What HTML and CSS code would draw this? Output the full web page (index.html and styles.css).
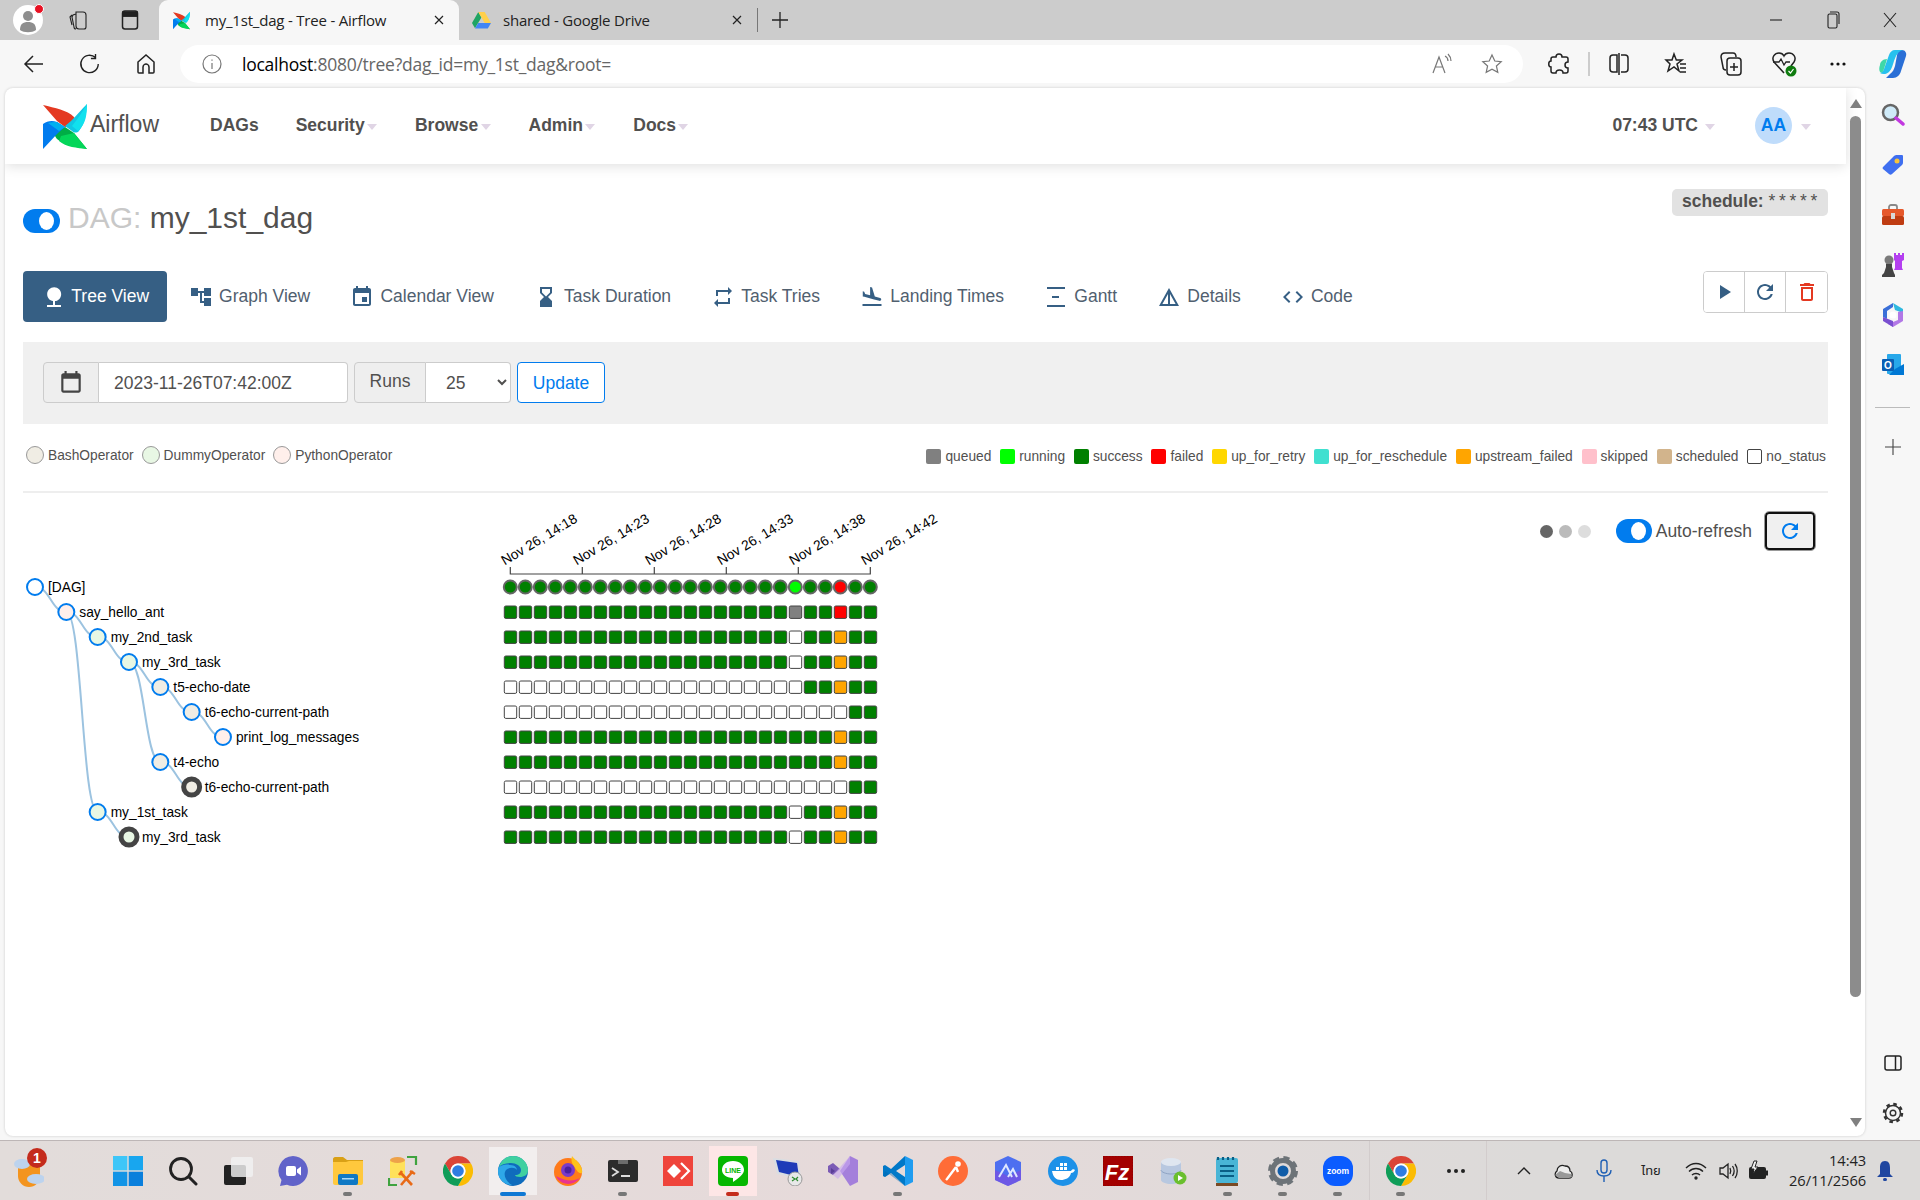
FILE: index.html
```html
<!DOCTYPE html>
<html lang="en">
<head>
<meta charset="utf-8">
<title>my_1st_dag - Tree - Airflow</title>
<link rel="stylesheet" href="styles.css">
</head>
<body>
<svg class="defs" aria-hidden="true">
  <symbol id="pin" viewBox="0 0 44 45">
    <path fill="#e43921" d="M0 1C12 4 24 6 31 13c2 3 1 7-2 9l-7 1L14 17z"/>
    <path fill="#11c7e3" d="M44 0c-1 12-2 19-8 27-2 2-5 2-7 0l-7-5 6-5C33 12 39 5 44 0z"/>
    <path fill="#11e1ee" d="M44 0c0 10-1 20-9 27l-6-5c5-6 11-15 15-22z"/>
    <path fill="#00ad46" d="M44 45c-12-2-23-4-30-10-3-3-3-7 0-9l8-3 9 6z"/>
    <path fill="#04d659" d="M44 45c-10-1-21-2-28-8l2-5 13-3z"/>
    <path fill="#017cee" d="M0 45V20c4-3 9-4 14-2l8 5-7 6C10 34 5 40 0 45z"/>
    <path fill="#00b0f0" d="M5 19c3-1 6-1 9-1l8 5-6 4c-4-3-8-6-11-8z"/>
  </symbol>
  <symbol id="chrome" viewBox="0 0 30 30">
    <path fill="#db4437" d="M2 7.5A15 15 0 0 1 28 7.5H15a7.5 7.5 0 0 0-6.5 11.25z"/>
    <path fill="#fbbc04" d="M28 7.5A15 15 0 0 1 15 30l6.5-11.25A7.5 7.5 0 0 0 15 7.5z"/>
    <path fill="#0f9d58" d="M15 30A15 15 0 0 1 2 7.5l6.5 11.25a7.5 7.5 0 0 0 13 0z"/>
    <circle cx="15" cy="15" r="7.5" fill="#fff"/><circle cx="15" cy="15" r="5.8" fill="#2f7de1"/>
  </symbol>
  <symbol id="refresh" viewBox="0 0 24 24"><path d="M17.65 6.35C16.2 4.9 14.21 4 12 4c-4.42 0-7.99 3.58-7.99 8s3.57 8 7.99 8c3.73 0 6.84-2.55 7.73-6h-2.08c-.82 2.33-3.04 4-5.65 4-3.31 0-6-2.69-6-6s2.69-6 6-6c1.66 0 3.14.69 4.22 1.78L13 11h7V4l-2.35 2.35z"/></symbol>
</svg>

<div class="tabstrip">
  <div class="cell profile-cell">
    <span class="profile">
      <svg width="30" height="30" viewBox="0 0 30 30"><circle cx="15" cy="15" r="15" fill="#fff"/><circle cx="15" cy="11" r="5" fill="#8e8e8e"/><path fill="#8e8e8e" d="M7 25c0-6 3-8 8-8s8 2 8 8c-4 3-12 3-16 0z"/></svg>
      <i class="profile-dot"></i>
    </span>
  </div>
  <div class="cell coll-cell"><svg width="22" height="22" viewBox="0 0 22 22" class="ln"><path d="M9 3l7 0c2 0 3 1 3 3v12c0 1-1 2-2 2h-5c-2 0-3-1-3-3V5c0-1 0-2 0-2zM9 5L6 6 5 8l2 10c0 1 1 2 2 2M5 6L3 8l2 8"/></svg></div>
  <div class="cell act-cell"><svg width="20" height="22" viewBox="0 0 20 22" class="ln thick"><rect x="2.5" y="2" width="15" height="18" rx="2.5"/><path d="M2.5 7h15"/><path d="M3 3h14v4H3z" fill="#222"/></svg></div>
  <div class="tab tab-active">
    <svg width="17" height="19"><use href="#pin"/></svg>
    <span class="tab-title">my_1st_dag - Tree - Airflow</span>
    <svg class="tab-x" width="12" height="12" viewBox="0 0 12 12"><path d="M2 2l8 8M10 2l-8 8" stroke="#222" stroke-width="1.2"/></svg>
  </div>
  <div class="tab tab-second">
    <svg width="19" height="17" viewBox="0 0 19 17"><path fill="#1fa463" d="M6.3 0L0 11l3 5.3L9.4 5.5z"/><path fill="#ffd04b" d="M12.7 0H6.3l6.4 11H19z"/><path fill="#4285f4" d="M3 16.5h12.8L19 11H6.2z"/></svg>
    <span class="tab-title">shared - Google Drive</span>
    <svg class="tab-x" width="12" height="12" viewBox="0 0 12 12"><path d="M2 2l8 8M10 2l-8 8" stroke="#222" stroke-width="1.2"/></svg>
  </div>
  <i class="tab-sep"></i>
  <div class="cell plus-cell"><svg width="18" height="18" viewBox="0 0 18 18"><path d="M9 1v16M1 9h16" stroke="#222" stroke-width="1.3"/></svg></div>
  <div class="win-controls">
    <div class="cell win"><svg width="14" height="14" viewBox="0 0 14 14"><path d="M1 7h12" stroke="#222" stroke-width="1.1"/></svg></div>
    <div class="cell win"><svg width="14" height="20" viewBox="0 0 14 20" class="ln"><rect x="2" y="4" width="9" height="14" rx="1.5"/><path d="M4 2h7c1 0 2 1 2 2v10"/></svg></div>
    <div class="cell win"><svg width="16" height="18" viewBox="0 0 16 18"><path d="M2 2l12 14M14 2L2 16" stroke="#222" stroke-width="1.1"/></svg></div>
  </div>
</div>

<div class="toolbar">
  <div class="cell tb"><svg width="22" height="22" viewBox="0 0 22 22" class="ln thick"><path d="M20 11H3M10 3l-8 8 8 8"/></svg></div>
  <div class="cell tb"><svg width="22" height="22" viewBox="0 0 24 24" class="ln thick"><path d="M18 5a9.5 9.5 0 1 0 3 7M18 1v5h-5"/></svg></div>
  <div class="cell tb"><svg width="22" height="22" viewBox="0 0 22 22" class="ln thick"><path d="M3 9l8-7 8 7v10c0 1-1 1-1 1h-4v-6c0-2-2-3-3-3s-3 1-3 3v6H4s-1 0-1-1z"/></svg></div>
  <div class="omnibox">
    <div class="cell info"><svg width="20" height="20" viewBox="0 0 20 20" class="ln grey"><circle cx="10" cy="10" r="9"/><path d="M10 9v6M10 5.5v1.2"/></svg></div>
    <span class="url"><span class="url-host">localhost</span>:8080/tree?dag_id=my_1st_dag&amp;root=</span>
    <div class="omni-right">
      <div class="cell om"><svg width="22" height="22" viewBox="0 0 22 22" class="ln grey"><path d="M2 20L8 4l6 16M4 14h8M14 3c2 1 3 3 3 5M17 1c2 2 3 4 3 7"/></svg></div>
      <div class="cell om"><svg width="22" height="22" viewBox="0 0 22 22" class="ln grey"><path d="M11 2l2.8 6 6.4.7-4.8 4.3 1.4 6.4L11 16.2l-5.8 3.2 1.4-6.4L1.8 8.7 8.200 8z"/></svg></div>
    </div>
  </div>
  <div class="cell ext"><svg width="22" height="24" viewBox="0 0 22 24" class="ln thick"><path d="M8 5c0-4 6-4 6 0h4c1 0 2 1 2 2v3c-4 0-4 6 0 6v3c0 1-1 2-2 2h-3c0-4-7-4-7 0H5c-1 0-2-1-2-2v-4c-3 0-3-6 0-6V7c0-1 1-2 2-2z"/></svg></div>
  <i class="tb-sep"></i>
  <div class="cell tr tr-split"><svg width="22" height="24" viewBox="0 0 22 24" class="ln thick"><path d="M9 3H5C3 3 2 4 2 6v11c0 2 1 3 3 3h4zM11 1v22M13 3h4c2 0 3 1 3 3v11c0 2-1 3-3 3h-4"/></svg></div>
  <div class="cell tr"><svg width="24" height="24" viewBox="0 0 24 24" class="ln thick"><path d="M10 2l2.300 6H18l-5 4 2 7-5-4-6 4 2-7-4-4h6zM16 12h6M16 16h6M16 20h6"/></svg></div>
  <div class="cell tr"><svg width="24" height="26" viewBox="0 0 24 26" class="ln thick"><rect x="8" y="7" width="14" height="17" rx="3"/><path d="M15 12v8M11 16h8M17 6c0-2-1-4-3-4H6C3 2 2 4 2 6l2 10c0 2 1 3 3 3"/></svg></div>
  <div class="cell tr tr-n"><svg width="26" height="26" viewBox="0 0 26 26"><path d="M13 22L3 11C0 6 4 2 8 2c2 0 4 1 5 3 1-2 3-3 5-3 4 0 8 4 5 9l-3 4" fill="none" stroke="#222" stroke-width="1.5"/><path d="M2 11h6l2-3 3 6 2-3h4" fill="none" stroke="#222" stroke-width="1.3"/><circle cx="20" cy="20" r="5.500" fill="#107c10"/><path d="M17.500 20l2 2 3-4" stroke="#fff" stroke-width="1.200" fill="none"/></svg></div>
  <div class="cell tr"><svg width="18" height="6" viewBox="0 0 18 6"><circle cx="3" cy="3" r="1.600" fill="#111"/><circle cx="9" cy="3" r="1.600" fill="#111"/><circle cx="15" cy="3" r="1.600" fill="#111"/></svg></div>
  <div class="cell tr"><svg width="30" height="30" viewBox="0 0 30 30"><path fill="#2a6fd6" d="M20 1h4c3 0 5 3 4 6l-5 15c-1 4-4 7-8 7H8l4-4c3-2 4-5 5-8z"/><path fill="#27c0ee" d="M17 1c-3 0-5 2-6 5L6 20c-1 3-4 4-4 4 3 2 7 1 9-1 3-3 4-8 5-11 2-5 3-9 9-11z" /><path fill="#3fd8a8" d="M2 16c0-3 3-6 7-6l-3 10c-1 3-2 4-4 3-1-2-1-4 0-7z"/></svg></div>
</div>

<div class="middle">
  <div class="card">
    <div class="page">
      <nav class="nav">
        <a class="brand">
          <svg class="brand-pin" width="44" height="45"><use href="#pin"/></svg>
          <span class="brand-name">Airflow</span>
        </a>
        <a class="nav-item nav-dags">DAGs</a>
        <a class="nav-item">Security<i class="caret"></i></a>
        <a class="nav-item">Browse<i class="caret"></i></a>
        <a class="nav-item">Admin<i class="caret"></i></a>
        <a class="nav-item">Docs<i class="caret"></i></a>
        <div class="nav-right">
          <span class="nav-time">07:43 UTC<i class="caret caret-time"></i></span>
          <span class="avatar">AA</span><i class="caret caret-avatar"></i>
        </div>
      </nav>

      <main class="content">
        <div class="head-row">
          <h1 class="dag-title"><span class="switch"><i class="knob"></i></span><span class="dag-label">DAG:</span> my_1st_dag</h1>
          <span class="schedule"><b>schedule:</b> <span class="cron">* * * * *</span></span>
        </div>

        <div class="tabs-row">
          <ul class="pills">
            <li class="pill pill-on"><svg class="mi" viewBox="0 0 24 24"><path d="M13 16.120c3.470-.41 6.170-3.360 6.170-6.950 0-3.870-3.130-7-7-7s-7 3.130-7 7c0 3.470 2.520 6.340 5.830 6.890V20H5v2h14v-2h-6v-3.880z"/></svg>Tree View</li>
            <li class="pill"><svg class="mi" viewBox="0 0 24 24"><path d="M22 11V3h-7v3H9V3H2v8h7V8h2v10h4v3h7v-8h-7v3h-2V8h2v3z"/></svg>Graph View</li>
            <li class="pill"><svg class="mi" viewBox="0 0 24 24"><path d="M17 12h-5v5h5v-5zM16 1v2H8V1H6v2H5c-1.110 0-1.990.9-1.990 2L3 19c0 1.100.89 2 2 2h14c1.100 0 2-.9 2-2V5c0-1.100-.9-2-2-2h-1V1h-2zm3 18H5V8h14v11z"/></svg>Calendar View</li>
            <li class="pill"><svg class="mi" viewBox="0 0 24 24"><path d="M18 22l-.01-6L14 12l3.990-4.010L18 2H6v6l4 4-4 3.990V22h12zM8 7.500V4h8v3.500l-4 4-4-4z"/></svg>Task Duration</li>
            <li class="pill"><svg class="mi" viewBox="0 0 24 24"><path d="M7 7h10v3l4-4-4-4v3H5v6h2V7zm10 10H7v-3l-4 4 4 4v-3h12v-6h-2v4z"/></svg>Task Tries</li>
            <li class="pill"><svg class="mi" viewBox="0 0 24 24"><path d="M2.500 19h19v2h-19zm7.180-5.730l4.350 1.160 5.310 1.420c.8.210 1.620-.26 1.840-1.060.21-.8-.26-1.620-1.060-1.840l-5.310-1.420-2.760-9.020L10.120 2v8.280L5.150 8.950l-.93-2.320-1.450-.39v5.170l1.600.43 5.310 1.430z"/></svg>Landing Times</li>
            <li class="pill"><svg class="mi" viewBox="0 0 24 24"><path d="M3 2h18v2H3zM3 20h18v2H3zM8 11h7v2H8z"/></svg>Gantt</li>
            <li class="pill"><svg class="mi" viewBox="0 0 24 24"><path d="M12 3L2 21h20L12 3zm1 5.920L18.600 19H13V8.920zm-2 0V19H5.400L11 8.920z"/></svg>Details</li>
            <li class="pill"><svg class="mi" viewBox="0 0 24 24"><path d="M9.400 16.600L4.800 12l4.600-4.600L8 6l-6 6 6 6 1.400-1.400zm5.200 0l4.600-4.600-4.600-4.600L16 6l6 6-6 6-1.400-1.400z"/></svg>Code</li>
          </ul>
          <div class="actions">
            <button class="act"><svg class="mi act-blue" viewBox="0 0 24 24"><path d="M8 5v14l11-7z"/></svg></button>
            <button class="act"><svg class="mi act-blue"><use href="#refresh"/></svg></button>
            <button class="act"><svg class="mi act-red" viewBox="0 0 24 24"><path d="M6 19c0 1.100.9 2 2 2h8c1.100 0 2-.9 2-2V7H6v12zM8 9h8v10H8V9zm7.500-5l-1-1h-5l-1 1H5v2h14V4z"/></svg></button>
          </div>
        </div>

        <form class="filter">
          <div class="group">
            <span class="addon addon-cal"><svg class="cal" viewBox="0 0 24 24"><path d="M19 3h-1V1h-2v2H8V1H6v2H5c-1.100 0-2 .9-2 2v14c0 1.100.9 2 2 2h14c1.100 0 2-.9 2-2V5c0-1.100-.9-2-2-2zm0 16H5V8h14v11z"/></svg></span>
            <input class="date" type="text" value="2023-11-26T07:42:00Z">
          </div>
          <div class="group">
            <span class="addon addon-runs">Runs</span>
            <select class="runs"><option>25</option></select>
          </div>
          <button type="button" class="update">Update</button>
        </form>

        <div class="legends">
          <div class="legend-ops">
            <span class="op"><i class="op-dot bash"></i>BashOperator</span>
            <span class="op"><i class="op-dot dummy"></i>DummyOperator</span>
            <span class="op"><i class="op-dot python"></i>PythonOperator</span>
          </div>
          <div class="legend-states">
            <span class="st"><i class="st-box queued"></i>queued</span>
            <span class="st"><i class="st-box running"></i>running</span>
            <span class="st"><i class="st-box success"></i>success</span>
            <span class="st"><i class="st-box failed"></i>failed</span>
            <span class="st"><i class="st-box retry"></i>up_for_retry</span>
            <span class="st"><i class="st-box resched"></i>up_for_reschedule</span>
            <span class="st"><i class="st-box upstream"></i>upstream_failed</span>
            <span class="st"><i class="st-box skipped"></i>skipped</span>
            <span class="st"><i class="st-box scheduled"></i>scheduled</span>
            <span class="st"><i class="st-box nostatus"></i>no_status</span>
          </div>
        </div>
        <hr class="rule">

        <section class="tree-area">
          <svg id="tree" class="tree-svg" width="1000" height="400" viewBox="23 493 1000 400"></svg>
          <div class="refresh-bar">
            <span class="dots"><i class="dot d1"></i><i class="dot d2"></i><i class="dot d3"></i></span>
            <span class="switch switch-auto"><i class="knob"></i></span>
            <span class="auto-label">Auto-refresh</span>
            <button class="refresh-btn"><svg class="mi rb-icon"><use href="#refresh"/></svg></button>
          </div>
        </section>
      </main>
    </div>
    <div class="scrollbar">
      <i class="sb-up"></i>
      <i class="sb-thumb"></i>
      <i class="sb-down"></i>
    </div>
  </div>

  <aside class="sidebar">
    <div class="cell side"><svg width="24" height="24" viewBox="0 0 24 24"><circle cx="9.500" cy="9.500" r="7.500" fill="#cfeaf8" stroke="#666" stroke-width="2.500"/><path d="M15 15l7 6" stroke="#c238e0" stroke-width="3.500" stroke-linecap="round"/></svg></div>
    <div class="cell side"><svg width="24" height="24" viewBox="0 0 24 24"><path fill="#3f6ff0" d="M2 14L13 3c1-1 2-1 3-1h5c1 0 1 1 1 1v6c0 1 0 2-1 3L11 21c-1 1-2 1-3 0l-6-5c-1-1 0-2 0-2z"/><circle cx="16" cy="8" r="2.500" fill="#f6c33b"/></svg></div>
    <div class="cell side"><svg width="24" height="22" viewBox="0 0 24 22"><path d="M8 5V3c0-1 1-2 2-2h4c1 0 2 1 2 2v2" fill="none" stroke="#888" stroke-width="1.800"/><rect x="1" y="5" width="22" height="7" rx="1.500" fill="#e6582b"/><rect x="1" y="12" width="22" height="9" rx="1.500" fill="#bf3c12"/><rect x="10" y="9" width="4" height="6" fill="#d8d8d8"/></svg></div>
    <div class="cell side"><svg width="24" height="26" viewBox="0 0 24 26"><path fill="#b43ff0" d="M13 1h2v2h2V1h2v2h2V1h2v7l-2 1v7l1 2H13l1-2V9l-1-1z"/><circle cx="8" cy="8" r="4.500" fill="#7a7a7a"/><path fill="#444" d="M5 12h6v3l2 6 1 2v2H1v-2l2-2 2-6z"/></svg></div>
    <div class="cell side"><svg width="22" height="24" viewBox="0 0 22 24"><path fill="#3a6fd8" d="M11 0L1 6v8l4 2V8l6-4z"/><path fill="#2fb9e0" d="M11 0l10 6v4l-8-3z"/><path fill="#b278e6" d="M21 8v10l-10 6-5-3 10-4v-8z"/><path fill="#7a4fd0" d="M1 14v4l10 6V18z"/><circle cx="11" cy="12" r="3.500" fill="#fff"/></svg></div>
    <div class="cell side"><svg width="22" height="22" viewBox="0 0 22 22"><rect x="5" y="0" width="14" height="20" rx="1" fill="#28a8ea"/><path fill="#0078d4" d="M22 10v11H7l6-6z"/><rect x="0" y="5" width="12" height="12" rx="1" fill="#0a5fb4"/><text class="ol-text" x="6" y="14.600">O</text></svg></div>
    <i class="side-sep"></i>
    <div class="cell side plus-side"><svg width="16" height="16" viewBox="0 0 16 16"><path d="M8 0v16M0 8h16" stroke="#444" stroke-width="1.100"/></svg></div>
    <div class="cell side side-bottom"><svg width="18" height="16" viewBox="0 0 18 16" class="ln thick"><rect x="1" y="1" width="16" height="14" rx="2"/><path d="M11.500 1v14"/></svg></div>
    <div class="cell side"><svg width="22" height="22" viewBox="0 0 22 22"><circle cx="11" cy="11" r="7.500" fill="none" stroke="#333" stroke-width="1.500"/><circle cx="11" cy="11" r="9" fill="none" stroke="#333" stroke-width="2.500" stroke-dasharray="3.500 3.570"/><circle cx="11" cy="11" r="2.800" fill="none" stroke="#333" stroke-width="1.400"/></svg></div>
  </aside>
</div>

<footer class="taskbar">
  <div class="tk tk-weather">
    <svg width="32" height="32" viewBox="0 0 32 32"><path fill="#f3941e" d="M6 9h22v12a11 11 0 0 1-22 0z"/><ellipse cx="10" cy="9" rx="8" ry="5" fill="#bcd3ee"/><ellipse cx="24" cy="24" rx="9" ry="5" fill="#bcd3ee"/></svg>
    <b class="badge">1</b>
  </div>
  <div class="tk-gap"></div>
  <div class="tk"><svg width="30" height="30" viewBox="0 0 30 30"><rect width="14.300" height="14.300" fill="#3ec6f8"/><rect x="15.700" width="14.300" height="14.300" fill="#18a6ef"/><rect y="15.700" width="14.300" height="14.300" fill="#1294e6"/><rect x="15.700" y="15.700" width="14.300" height="14.300" fill="#0a7fdc"/></svg></div>
  <div class="tk"><svg width="30" height="30" viewBox="0 0 30 30"><circle cx="13" cy="13" r="10.500" fill="none" stroke="#222" stroke-width="2.800"/><path d="M21 21l7 7" stroke="#222" stroke-width="3" stroke-linecap="round"/></svg></div>
  <div class="tk"><svg width="30" height="30" viewBox="0 0 30 30"><rect x="1" y="9" width="22" height="20" rx="2" fill="#222"/><rect x="8" y="1" width="22" height="20" rx="2" fill="#f2f2f2" opacity=".82"/></svg></div>
  <div class="tk"><svg width="30" height="30" viewBox="0 0 30 30"><path fill="#6163c9" d="M15 0a15 15 0 1 1-6 28.800L2 30l1.500-6A15 15 0 0 1 15 0z"/><rect x="8" y="10" width="10" height="10" rx="2" fill="#fff"/><path fill="#fff" d="M19 13.500l4-3v9l-4-3z"/></svg></div>
  <div class="tk tk-open"><svg width="30" height="30" viewBox="0 0 30 30"><path fill="#d9a016" d="M0 3c0-1 1-2 2-2h8l4 3h16v6H0z"/><path fill="#ffc83d" d="M0 6h13l3-1h14v22c0 1-1 2-2 2H2c-1 0-2-1-2-2z"/><rect x="5" y="18" width="20" height="11" rx="2" fill="#0f78c4"/><rect x="9" y="22" width="12" height="1.500" fill="#a8d8f8"/></svg></div>
  <div class="tk"><svg width="30" height="30" viewBox="0 0 30 30"><path fill="#ffe15a" d="M2 4h15v18H2z"/><ellipse cx="9.500" cy="4" rx="7.500" ry="3" fill="#eda24a"/><path d="M19 1h9v8M1 22v7h8" fill="none" stroke="#3fa33f" stroke-width="2.200"/><path d="M12 16l12 13M25 15L13 29M22 15l5 3M11 19l3-4" stroke="#e86a17" stroke-width="2.600" fill="none"/></svg></div>
  <div class="tk"><svg width="30" height="30"><use href="#chrome"/></svg></div>
  <div class="tk tk-active"><svg width="30" height="30" viewBox="0 0 30 30"><circle cx="15" cy="15" r="15" fill="#0f6cbd"/><path fill="#3fd0a0" d="M1 11C3 4 9 0 15 0c9 0 15 7 15 14 0 5-4 7-8 7-3 0-5-1-5-2 4 0 6-2 6-5 0-4-5-7-10-7-6 0-10 2-12 4z"/><path fill="#2ea8e8" d="M1 11c3-2 7-3 11-2 5 0 7 3 7 5-2-3-8-3-11 0-3 4-1 11 6 15C6 29 0 23 0 15c0-1 0-3 1-4z"/></svg><i class="under u-edge"></i></div>
  <div class="tk"><svg width="30" height="30" viewBox="0 0 30 30"><circle cx="15" cy="16" r="14" fill="#ff7a1a"/><path fill="#ffc21a" d="M19 0c2 3 9 7 10 14 1 4-1 4-4 2-4-6-8-9-6-16z"/><path fill="#e8338f" d="M3 20c3 8 16 12 24 2-6 3-13 4-24-2z"/><circle cx="15" cy="14" r="7" fill="#7a3bc8"/><circle cx="15" cy="14" r="3.500" fill="#4b1fa0"/></svg></div>
  <div class="tk tk-open"><svg width="30" height="22" viewBox="0 0 30 22"><rect width="30" height="22" rx="2" fill="#2c2c2c"/><rect x="10" width="10" height="4" fill="#6c6c6c"/><path d="M4 8l6 4-6 4" fill="none" stroke="#ddd" stroke-width="1.800"/><path d="M13 16h9" stroke="#ddd" stroke-width="2"/></svg></div>
  <div class="tk"><svg width="30" height="30" viewBox="0 0 30 30"><rect width="30" height="30" fill="#ef443b"/><path fill="#fff" d="M11 8l7 7-7 7-7-7z"/><path d="M18 7l8 8-8 8" fill="none" stroke="#fff" stroke-width="2.200"/></svg></div>
  <div class="tk tk-line"><svg width="30" height="30" viewBox="0 0 30 30"><rect width="30" height="30" rx="4" fill="#06b700"/><path fill="#fff" d="M15 5c7 0 11 4 11 9 0 4-5 8-11 12v-4C8 22 4 18 4 14c0-5 4-9 11-9z"/><text class="line-text" x="15" y="16.500">LINE</text></svg><i class="under u-line"></i></div>
  <div class="tk"><svg width="30" height="30" viewBox="0 0 30 30"><path fill="#d9dde2" d="M0 2l26 3 2 18L4 18z"/><path fill="#1d3bb8" d="M3 4l21 3 2 14-20-5z"/><circle cx="22" cy="23" r="7" fill="#e8e8e8" stroke="#9a9a9a"/><path d="M19 21l3 2-3 2M25 21l-2 2 2 2" stroke="#2e8b2e" fill="none" stroke-width="1.200"/></svg></div>
  <div class="tk"><svg width="30" height="30" viewBox="0 0 30 30"><path fill="#7b5bb5" d="M0 10l5-3 7 6-7 6-5-3z"/><path fill="#5c3e98" d="M3 12v6l4-3z"/><path fill="#a47fdb" d="M22 0l8 4v22l-8 4-10-15z"/><path fill="#c9a8f0" d="M22 0l-17 19 5 4L22 8z" opacity=".6"/></svg></div>
  <div class="tk tk-open"><svg width="30" height="30" viewBox="0 0 30 30"><path fill="#1f9cf0" d="M22 0l8 4v22l-8 4z"/><path fill="#0078c8" d="M22 0L8 13 2 9 0 10v10l2 1 6-4 14 13V21l-9-6 9-6z"/><path fill="#0065a9" d="M22 30l-14-13-6 4-2-1 2-5 20 15z" opacity=".4"/></svg></div>
  <div class="tk"><svg width="30" height="30" viewBox="0 0 30 30"><circle cx="15" cy="15" r="15" fill="#ff6c37"/><circle cx="20" cy="8" r="2.800" fill="#fff"/><path d="M18 11l-9 12-1 1M18 11l2 5" stroke="#fff" stroke-width="2.400" fill="none"/></svg></div>
  <div class="tk"><svg width="30" height="30" viewBox="0 0 30 30"><path fill="#4d6ff0" d="M15 0l13 6v18l-13 6-13-6V6z"/><path fill="#7a4ee0" d="M15 30l13-6V14L15 20 2 14v10z" opacity=".7"/><path d="M6 21l7-12 6 12M15 21l5-8 4 8" fill="none" stroke="#dfe8ff" stroke-width="2"/></svg></div>
  <div class="tk"><svg width="30" height="30" viewBox="0 0 30 30"><circle cx="15" cy="15" r="15" fill="#1d91e8"/><path fill="#fff" d="M4 15h19c1-2 3-2 4-1-1 2-2 3-4 3-1 5-6 7-10 7-5 0-8-3-9-9z"/><path fill="#fff" d="M8 11h3v3H8zm4 0h3v3h-3zm4 0h3v3h-3zm-4-4h3v3h-3zm4 0h3v3h-3z"/></svg></div>
  <div class="tk"><svg width="30" height="30" viewBox="0 0 30 30"><rect width="30" height="30" fill="#a40000" stroke="#7f0000" stroke-dasharray="1.500 1.500"/><text class="fz-text" x="14" y="24">Fz</text></svg></div>
  <div class="tk"><svg width="30" height="30" viewBox="0 0 30 30"><path fill="#b8c8e0" d="M3 6v18c0 2 5 4 10 4s10-2 10-4V6z"/><ellipse cx="13" cy="6" rx="10" ry="4" fill="#dfe6f0"/><path d="M3 14c0 2 5 4 10 4s10-2 10-4" fill="none" stroke="#8ea3c4"/><circle cx="22" cy="22" r="6.500" fill="#6abf2e"/><path fill="#fff" d="M20 19l5 3-5 3z"/></svg></div>
  <div class="tk tk-open"><svg width="24" height="30" viewBox="0 0 24 30"><rect y="2" width="22" height="25" fill="#49b5d6" rx="2"/><rect y="27" width="22" height="3" fill="#7a4a24"/><path d="M4 10h14M4 15h14M4 20h14" stroke="#0a5f86" stroke-width="2"/><path d="M2 1v3M7 1v3M12 1v3M17 1v3" stroke="#0a5f86" stroke-width="2.200"/></svg></div>
  <div class="tk tk-open"><svg width="30" height="30" viewBox="0 0 30 30"><circle cx="15" cy="15" r="10.500" fill="none" stroke="#6d7378" stroke-width="5"/><circle cx="15" cy="15" r="13" fill="none" stroke="#6d7378" stroke-width="4" stroke-dasharray="6 4.210"/><circle cx="15" cy="15" r="5.500" fill="#0f5ca8"/></svg></div>
  <div class="tk tk-open"><svg width="30" height="30" viewBox="0 0 30 30"><rect width="30" height="30" rx="12" fill="#0b5cff"/><text class="zoom-text" x="15" y="17.500">zoom</text></svg></div>
  <i class="tk-sep"></i>
  <div class="tk tk-open tk-chrome"><svg width="30" height="30"><use href="#chrome"/></svg></div>
  <div class="tk"><svg width="20" height="6" viewBox="0 0 20 6"><circle cx="3" cy="3" r="2" fill="#222"/><circle cx="10" cy="3" r="2" fill="#222"/><circle cx="17" cy="3" r="2" fill="#222"/></svg></div>
  <i class="tk-sep tk-sep2"></i>
  <div class="tray tray-chev"><svg width="14" height="9" viewBox="0 0 14 9"><path d="M1 8l6-6 6 6" fill="none" stroke="#222" stroke-width="1.400"/></svg></div>
  <div class="tray"><svg width="20" height="18" viewBox="0 0 20 18"><path d="M5 16C1 16 0 11 3 9c0-4 4-7 8-5 3 0 5 2 5 5 3 1 3 7-1 7z" fill="#ececec" stroke="#222" stroke-width="1.300"/><path d="M1 13l5-4 5 2 6 1 1 3-3 1H5z" fill="#999"/></svg></div>
  <div class="tray"><svg width="16" height="24" viewBox="0 0 16 24" fill="none" stroke="#1f5fb4" stroke-width="1.400"><rect x="5" y="1" width="6" height="13" rx="3"/><path d="M1 11c0 4 3 6 7 6s7-2 7-6M8 17v6"/></svg></div>
  <div class="tray tray-thai">ไทย</div>
  <div class="tray tray-wifi"><svg width="22" height="18" viewBox="0 0 22 18" fill="none" stroke="#222" stroke-width="1.400"><path d="M1 6c6-6 14-6 20 0M4 9.500c4-4 10-4 14 0M7 13c2-2 6-2 8 0"/><circle cx="11" cy="16" r="1" fill="#222"/></svg></div>
  <div class="tray tray-spk"><svg width="20" height="20" viewBox="0 0 20 20" fill="none" stroke="#222" stroke-width="1.300"><path d="M2 7v6h3l5 4V3L5 7zM12 7c1 2 1 4 0 6M14.500 5c2 3 2 7 0 10M17 3c3 4 3 10 0 14"/></svg></div>
  <div class="tray tray-bat"><svg width="22" height="22" viewBox="0 0 22 22"><rect x="2" y="7" width="17" height="12" rx="2" fill="#222"/><rect x="19" y="10.500" width="2" height="5" fill="#222"/><path d="M7 1L4 9h3l-1 5 5-7H8l2-6z" fill="#eee" stroke="#222" stroke-width="1"/></svg></div>
  <div class="clock"><span>14:43</span><span>26/11/2566</span></div>
  <div class="tray tray-bell"><svg width="16" height="20" viewBox="0 0 16 20"><path fill="#1f46a0" d="M8 0c4 0 5 3 5 7v6l3 3H0l3-3V7c0-4 1-7 5-7z"/><rect x="6" y="17" width="4" height="3" rx="1.500" fill="#1f46a0"/></svg></div>
</footer>
<script src="script.js"></script>
</body>
</html>
```
FILE: styles.css
```css
* { box-sizing: border-box; }
html, body { margin: 0; padding: 0; }
body { width: 1920px; height: 1200px; overflow: hidden; background: #f7f7f7; font-family: "Liberation Sans", Arial, sans-serif; color: #51504f; display: flex; flex-direction: column; }
.defs { position: absolute; width: 0; height: 0; }
i { display: block; font-style: normal; }
.cell { display: flex; align-items: center; justify-content: center; flex: none; }
.ln { fill: none; stroke: #222; stroke-width: 1.100; }
.ln.thick { stroke-width: 1.500; }
.ln.grey { stroke: #777; stroke-width: 1.200; }

/* browser chrome */
.tabstrip { height: 40px; flex: none; background: #ccc; display: flex; align-items: stretch; font-family: "Open Sans", sans-serif; font-size: 15px; color: #222; }
.profile-cell { width: 55px; }
.profile { position: relative; display: block; width: 30px; height: 30px; }
.profile svg { display: block; }
.profile-dot { position: absolute; top: -1px; right: -1px; width: 10px; height: 10px; border-radius: 50%; background: #e81123; border: 1px solid #fff; }
.coll-cell { width: 46px; }
.act-cell { width: 58px; }
.tab { width: 291px; display: flex; align-items: center; padding-left: 13px; }
.tab-active { width: 300px; background: #f7f7f7; border-radius: 9px 9px 0 0; padding-left: 14px; }
.tab-title { margin-left: 12px; flex: 1; white-space: nowrap; letter-spacing: -.2px; }
.tab-active .tab-title { margin-left: 15px; }
.tab-x { margin-right: 14px; }
.tab-second .tab-x { margin-right: 7px; }
.tab-sep { width: 1px; height: 24px; background: #777; align-self: center; margin-left: 7px; }
.plus-cell { width: 44px; }
.win-controls { display: flex; margin-left: auto; padding-right: 2px; }
.win { width: 57px; }

.toolbar { height: 48px; flex: none; background: #f7f7f7; display: flex; align-items: center; padding-left: 12px; gap: 0; }
.tb { width: 44px; margin-right: 12px; }
.tb:nth-child(3) { margin-right: 0; }
.omnibox { width: 1344px; height: 38px; margin-left: 12px; background: #fff; border-radius: 19px; display: flex; align-items: center; }
.info { width: 30px; margin-left: 17px; }
.url { margin-left: 15px; font-family: "Open Sans", sans-serif; font-size: 17.500px; letter-spacing: -.25px; color: #666; white-space: nowrap; }
.url-host { color: #000; }
.omni-right { margin-left: auto; display: flex; margin-right: 6px; }
.om { width: 50px; }
.ext { width: 40px; margin-left: 16px; }
.tb-sep { width: 2px; height: 24px; background: #ccc; margin-left: 9px; }
.tr { width: 55px; }
.tr-split { width: 58px; }
.tr-n { width: 52px; }

.middle { flex: 1; display: flex; padding-left: 5px; min-height: 0; }
.card { flex: 1; display: flex; background: #fff; border-radius: 8px; margin-bottom: 4px; box-shadow: 0 0 3px rgba(0,0,0,.18); overflow: hidden; }
.page { flex: 1; min-width: 0; }
.scrollbar { width: 19px; flex: none; position: relative; display: flex; flex-direction: column; align-items: center; }
.sb-up { width: 0; height: 0; border: 6px solid transparent; border-top: 0; border-bottom: 9px solid #808080; margin-top: 11px; }
.sb-thumb { width: 11px; height: 881px; margin-top: 8px; border-radius: 6px; background: #8c8c8c; }
.sb-down { width: 0; height: 0; border: 6px solid transparent; border-bottom: 0; border-top: 9px solid #808080; margin-top: 121px; }

.nav { height: 76px; display: flex; align-items: center; padding: 0 0 2px 38px; box-shadow: 0 2px 12px rgba(0,0,0,.13); position: relative; }
.brand { display: flex; align-items: center; width: 167px; flex: none; margin-top: 2px; }
.brand-pin { flex: none; }
.brand-name { margin-left: 3px; margin-top: -4px; font-size: 23px; color: #51504f; }
.nav-item { display: flex; align-items: center; margin-right: 38px; font-size: 17.500px; font-weight: 700; color: #51504f; }
.nav-dags { margin-right: 37px; }
.caret { width: 0; height: 0; border: 5.500px solid transparent; border-bottom: 0; border-top: 6px solid #e0d5e5; margin-left: 2.300px; margin-top: 4px; }
.nav-right { margin-left: auto; display: flex; align-items: center; font-size: 17.500px; font-weight: 700; padding-right: 35px; }
.nav-time { display: flex; align-items: center; }
.caret-time { margin-left: 7px; }
.avatar { width: 37px; height: 37px; border-radius: 50%; background: #bfdcfb; color: #017cee; display: flex; align-items: center; justify-content: center; margin-left: 40px; font-size: 17.500px; }
.caret-avatar { margin-left: 9px; }

.content { padding: 0 18px; }
.head-row { display: flex; justify-content: space-between; align-items: flex-start; height: 107px; padding-top: 25px; }
.dag-title { margin: 11px 0 0; display: flex; align-items: center; font-size: 30px; line-height: 36px; font-weight: 400; color: #51504f; white-space: pre; }
.dag-label { color: #c8c8c8; }
.switch { position: relative; display: block; width: 37px; height: 24px; border-radius: 12px; background: #017cee; flex: none; }
.dag-title .switch { margin-right: 8px; margin-top: 6px; }
.knob { position: absolute; left: 16px; top: 3px; width: 15px; height: 18px; border-radius: 50%; background: #fff; }
.schedule { height: 27px; width: 156px; background: #e2e2e2; border-radius: 5px; padding: 0 10px; font-size: 17.500px; line-height: 24px; white-space: nowrap; }
.schedule b { font-weight: 700; }
.cron { letter-spacing: -.6px; }

.tabs-row { display: flex; justify-content: space-between; align-items: flex-start; height: 51px; }
.pills { display: flex; list-style: none; margin: 0; padding: 0; }
.pill { height: 51px; display: flex; align-items: center; gap: 6px; padding: 0 18.200px 0 22px; font-size: 17.500px; color: #51606f; white-space: nowrap; }
.pill-on { background: #365f84; color: #fff; border-radius: 4px; gap: 5px; padding: 0 18px 0 19.300px; }
.mi { width: 24px; height: 24px; fill: currentColor; flex: none; display: block; }
.pill .mi { color: #365f84; }
.pill-on .mi { color: #fff; }
.actions { display: flex; border: 1px solid #ccc; border-radius: 4px; height: 42px; overflow: hidden; }
.act { width: 41px; background: #fff; border: 0; border-right: 1px solid #ccc; padding: 0; display: flex; align-items: center; justify-content: center; }
.act:last-child { border-right: 0; }
.act-blue { color: #365f84; }
.act-red { color: #e43921; }

.filter { margin-top: 20px; height: 82px; background: #f0f0f0; padding: 20px; display: flex; align-items: flex-start; gap: 6px; }
.group { display: flex; height: 41px; }
.addon { background: #eee; border: 1px solid #ccc; border-radius: 4px 0 0 4px; display: flex; align-items: center; justify-content: center; font-size: 17.500px; color: #51504f; }
.addon-cal { width: 56px; }
.cal { width: 26px; height: 26px; fill: #444; }
.date { width: 249px; height: 41px; border: 1px solid #ccc; border-left: 0; border-radius: 0 4px 4px 0; padding: 1px 0 0 15px; font: 17.500px "Liberation Sans", Arial, sans-serif; color: #51504f; background: #fff; }
.addon-runs { width: 72px; padding-bottom: 2px; }
.runs { width: 85px; height: 41px; border: 1px solid #ccc; border-left: 0; border-radius: 0 4px 4px 0; padding-left: 16px; font: 17.500px "Liberation Sans", Arial, sans-serif; color: #51504f; background: #fff; }
.update { width: 88px; height: 41px; background: #fff; border: 1px solid #017cee; border-radius: 4px; color: #017cee; font: 17.500px "Liberation Sans", Arial, sans-serif; padding: 1px 0 0; }

.legends { display: flex; justify-content: space-between; align-items: flex-start; height: 67px; padding-top: 25px; font-size: 13.750px; }
.legend-ops { display: flex; padding-left: 3px; margin-top: -3px; }
.op { display: flex; align-items: center; gap: 4px; margin-right: 8px; height: 18px; }
.op-dot { width: 18px; height: 18px; border-radius: 50%; border: 1px solid #999; }
.bash { background: #f0ede4; }
.dummy { background: #e8f7e4; }
.python { background: #ffefeb; }
.legend-states { display: flex; gap: 8.850px; padding-right: 2px; }
.st { display: flex; align-items: center; gap: 4px; height: 15px; }
.st-box { width: 15px; height: 15px; border-radius: 2px; }
.queued { background: #808080; }
.running { background: #0f0; }
.success { background: #008000; }
.failed { background: #f00; }
.retry { background: #ffd700; }
.resched { background: #40e0d0; }
.upstream { background: #ffa500; }
.skipped { background: #ffc0cb; }
.scheduled { background: #d2b48c; }
.nostatus { background: #fff; border: 1px solid #444; }
.rule { margin: 0; height: 2px; border: 0; background: #eee; }

.tree-area { position: relative; height: 600px; }
.tree-svg { display: block; }
.tree-svg text { font-family: "Liberation Sans", Arial, sans-serif; font-size: 13.750px; fill: #000; }
.link { fill: none; stroke: #9cc3e0; stroke-width: 2; }
.node { stroke: #017cee; stroke-width: 2; }
.node-closed { stroke: #444; stroke-width: 5; }
.axis { fill: none; stroke: #444; stroke-width: 1.200; }
.sq { stroke: #444; stroke-width: 1; }
.ci { stroke: #666; stroke-width: 2; }

.refresh-bar { position: absolute; top: 19px; right: 13px; display: flex; align-items: center; height: 38px; font-size: 17.500px; }
.dots { display: flex; gap: 6px; margin-right: 25px; }
.dot { width: 13px; height: 13px; border-radius: 50%; }
.d1 { background: #666; }
.d2 { background: #bbb; }
.d3 { background: #ddd; }
.switch-auto { width: 36px; }
.switch-auto .knob { left: 15px; }
.auto-label { margin-left: 4px; }
.refresh-btn { width: 50px; height: 38px; margin-left: 13px; background: #f0f0f0; border: 2px solid #111; outline: 1px solid #999; outline-offset: 0; border-radius: 4px; padding: 0; display: flex; align-items: center; justify-content: center; }
.rb-icon { color: #017cee; }

/* edge sidebar */
.sidebar { width: 55px; flex: none; display: flex; flex-direction: column; align-items: center; }
.side { width: 55px; height: 50px; }
.side:first-child { margin-top: 2px; }
.ol-text { font: 700 10px "Liberation Sans", Arial, sans-serif; fill: #fff; text-anchor: middle; }
.side-sep { width: 35px; height: 1px; background: #bbb; margin-top: 17px; }
.plus-side { margin-top: 14px; }
.side-bottom { margin-top: 566px; }

/* taskbar */
.taskbar { height: 60px; flex: none; display: flex; align-items: center; border-top: 1px solid #bdb6b6; background: linear-gradient(90deg, #e2dcda, #e6dada 45%, #dcdad9 80%); font-family: "Open Sans", sans-serif; color: #222; }
.tk { position: relative; width: 55px; height: 59px; flex: none; display: flex; align-items: center; justify-content: center; }
.tk-gap { width: 45px; flex: none; }
.badge { position: absolute; left: 27px; top: 7px; width: 20px; height: 20px; border-radius: 50%; background: #c42b1c; color: #fff; font: 700 14px/20px "Liberation Sans", Arial, sans-serif; text-align: center; }
.tk-open::after { content: ""; position: absolute; left: 23px; bottom: 4px; width: 9px; height: 4px; border-radius: 2px; background: #777; }
.tk-active { background: linear-gradient(#f2eeee, #f2eeee) center / 48px 48px no-repeat; }
.under { position: absolute; left: 15px; bottom: 4px; height: 4px; width: 26px; border-radius: 2px; }
.u-edge { background: #0f78d4; }
.tk-line { background: linear-gradient(#fde6e6, #fde6e6) center / 48px 50px no-repeat; }
.u-line { left: 21px; width: 13px; background: #c42b1c; }
.line-text { font: 700 7px "Liberation Sans", Arial, sans-serif; fill: #06b700; text-anchor: middle; }
.fz-text { font: italic 700 22px "Liberation Sans", Arial, sans-serif; fill: #fff; text-anchor: middle; }
.zoom-text { font: 700 8.500px "Liberation Sans", Arial, sans-serif; fill: #fff; text-anchor: middle; }
.tk-sep { width: 1px; height: 59px; background: #d2cccc; margin-left: 4px; margin-right: 3px; flex: none; }
.tk-sep2 { margin-left: 3px; margin-right: 0; }
.tray { width: 40px; height: 59px; flex: none; display: flex; align-items: center; justify-content: center; }
.tray-chev { margin-left: 17px; }
.tray-thai { width: 54px; font-family: "Noto Sans Thai", "DejaVu Sans", sans-serif; font-size: 13px; }
.tray-wifi { width: 36px; }
.tray-spk { width: 28px; }
.tray-bat { width: 32px; }
.clock { width: 92px; margin-top: -2px; display: flex; flex-direction: column; align-items: flex-end; font-size: 14.700px; line-height: 20px; letter-spacing: -.1px; white-space: nowrap; }
.tray-bell { width: 37px; }
```
FILE: script.js
```js
// Tree view: task hierarchy on the left, run/status grid on the right.
var NS = 'http://www.w3.org/2000/svg';
var svg = document.getElementById('tree');
function el(name, attrs, text) {
  var e = document.createElementNS(NS, name);
  for (var k in attrs) e.setAttribute(k, attrs[k]);
  if (text) e.textContent = text;
  svg.appendChild(e);
  return e;
}
var BASH = '#f0ede4', DUMMY = '#e8f7e4', PY = '#ffefeb';
var G = '#008000', W = '#fff', O = '#ffa500';
var X0 = 35, DX = 31.33, Y0 = 587, DY = 25;
var nodes = [
  { n: '[DAG]', c: 0, f: '#fff', p: -1 },
  { n: 'say_hello_ant', c: 1, f: PY, p: 0 },
  { n: 'my_2nd_task', c: 2, f: DUMMY, p: 1 },
  { n: 'my_3rd_task', c: 3, f: DUMMY, p: 2 },
  { n: 't5-echo-date', c: 4, f: BASH, p: 3 },
  { n: 't6-echo-current-path', c: 5, f: BASH, p: 4 },
  { n: 'print_log_messages', c: 6, f: PY, p: 5 },
  { n: 't4-echo', c: 4, f: BASH, p: 3 },
  { n: 't6-echo-current-path', c: 5, f: BASH, p: 7, closed: 1 },
  { n: 'my_1st_task', c: 2, f: DUMMY, p: 1 },
  { n: 'my_3rd_task', c: 3, f: DUMMY, p: 9, closed: 1 }
];
function row(special) {
  var r = [];
  for (var i = 0; i < 25; i++) r.push(special[i] || G);
  return r;
}
function blank(upto, extra) {
  var s = {};
  for (var i = 0; i <= upto; i++) s[i] = W;
  for (var k in extra) s[k] = extra[k];
  return s;
}
var grid = [
  row({ 19: '#0f0', 22: '#f00' }),
  row({ 19: '#808080', 22: '#f00' }),
  row({ 19: W, 22: O }),
  row({ 19: W, 22: O }),
  row(blank(19, { 22: O })),
  row(blank(22)),
  row({ 22: O }),
  row({ 22: O }),
  row(blank(22)),
  row({ 19: W, 22: O }),
  row({ 19: W, 22: O })
];
// links
nodes.forEach(function (d, j) {
  if (d.p < 0) return;
  var p = nodes[d.p];
  var sx = X0 + p.c * DX, sy = Y0 + d.p * DY, tx = X0 + d.c * DX, ty = Y0 + j * DY, mx = (sx + tx) / 2;
  el('path', { 'class': 'link', d: 'M' + sx + ' ' + sy + 'C' + mx + ' ' + sy + ' ' + mx + ' ' + ty + ' ' + tx + ' ' + ty });
});
// nodes
nodes.forEach(function (d, j) {
  var x = X0 + d.c * DX, y = Y0 + j * DY;
  el('circle', { 'class': d.closed ? 'node-closed' : 'node', cx: x, cy: y, r: 8, fill: d.f });
  el('text', { x: x + 13, y: y + 4.5 }, d.n);
});
// axis
var AX = 510.3, AY = 574, STEP = 72;
el('path', { 'class': 'axis', d: 'M' + AX + ' ' + (AY - 7) + 'V' + AY + 'H' + (AX + 5 * STEP) + 'V' + (AY - 7) });
['14:18', '14:23', '14:28', '14:33', '14:38', '14:42'].forEach(function (t, i) {
  var x = AX + i * STEP;
  if (i > 0 && i < 5) el('path', { 'class': 'axis', d: 'M' + x + ' ' + (AY - 7) + 'V' + AY });
  el('text', { transform: 'translate(' + (x - 5.5) + ' ' + (AY - 8.5) + ') rotate(-31)' }, 'Nov 26, ' + t);
});
// status grid
grid.forEach(function (r, j) {
  r.forEach(function (color, i) {
    var cx = 510.3 + 15 * i, cy = Y0 + j * DY;
    if (j === 0) el('circle', { 'class': 'ci', cx: cx, cy: cy, r: 6.5, fill: color });
    else el('rect', { 'class': 'sq', x: cx - 6, y: cy - 6, width: 12.4, height: 12.4, rx: 1.5, fill: color });
  });
});
```
